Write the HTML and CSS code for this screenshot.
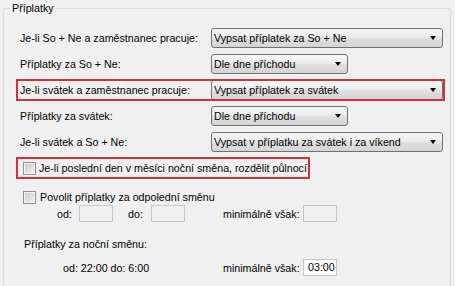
FILE: index.html
```
<!DOCTYPE html>
<html lang="cs">
<head>
    <meta charset="UTF-8">
    <meta name="viewport" content="width=device-width, initial-scale=1.0">
    <title>Příplatky</title>
    <link rel="stylesheet" href="styles.css">
</head>
<body>
    <fieldset class="group">
        <legend>Příplatky</legend>

        <div class="field">
            <label>Je-li So + Ne a zaměstnanec pracuje:</label>
            <div class="combo wide"><span>Vypsat příplatek za So + Ne</span><i class="arrow"></i></div>
        </div>
        <div class="field">
            <label>Příplatky za So + Ne:</label>
            <div class="combo short"><span>Dle dne příchodu</span><i class="arrow"></i></div>
        </div>
        <div class="field marked">
            <label>Je-li svátek a zaměstnanec pracuje:</label>
            <div class="combo wide"><span>Vypsat příplatek za svátek</span><i class="arrow"></i></div>
        </div>
        <div class="field">
            <label>Příplatky za svátek:</label>
            <div class="combo short"><span>Dle dne příchodu</span><i class="arrow"></i></div>
        </div>
        <div class="field">
            <label>Je-li svátek a So + Ne:</label>
            <div class="combo wide"><span>Vypsat v příplatku za svátek i za víkend</span><i class="arrow"></i></div>
        </div>

        <div class="check midnight marked">
            <span class="box"></span>
            <span>Je-li poslední den v měsíci noční směna, rozdělit půlnocí</span>
        </div>

        <div class="check afternoon">
            <span class="box"></span>
            <span>Povolit příplatky za odpolední směnu</span>
        </div>
        <div class="times">
            <span class="lbl-od">od:</span>
            <span class="input disabled"></span>
            <span class="lbl-do">do:</span>
            <span class="input disabled"></span>
            <span class="lbl-min">minimálně však:</span>
            <span class="input disabled"></span>
        </div>

        <div class="caption">Příplatky za noční směnu:</div>
        <div class="times night">
            <span class="range">od: 22:00 do: 6:00</span>
            <span class="lbl-min">minimálně však:</span>
            <span class="input">03:00</span>
        </div>
    </fieldset>
</body>
</html>
```

FILE: styles.css
```
html, body {
    overflow: hidden;
}
body {
    margin: 0;
    background-color: #f0f0f0;
    font-family: "Liberation Sans", Arial, sans-serif;
    font-size: 10.7px;
    color: #000;
}
.group {
    margin: 2px 4px 0 3px;
    padding: 13px 0 0 16px;
    border: 1px solid #d5dfe5;
    border-bottom: none;
    border-radius: 3px 3px 0 0;
    min-height: 280px;
}
.group legend {
    margin-left: -10px;
    padding: 0 2px;
    line-height: 13px;
}

/* label + combo rows */
.field {
    display: flex;
    align-items: center;
    width: 423px;
    height: 20px;
    margin-bottom: 6px;
    position: relative;
}
.field label {
    width: 191px;
    flex: none;
}
.combo {
    box-sizing: border-box;
    height: 20px;
    display: flex;
    align-items: center;
    justify-content: space-between;
    padding: 0 6px 0 2px;
    border: 1px solid #707070;
    border-radius: 3px;
    background: linear-gradient(#f7f7f7, #ececec 45%, #dedede 55%, #d5d5d5);
}
.combo.wide {
    width: 232px;
}
.combo.short {
    width: 137px;
}
.arrow {
    width: 0;
    height: 0;
    border-left: 3.5px solid transparent;
    border-right: 3.5px solid transparent;
    border-top: 4px solid #000;
}

/* red highlight frames */
.marked::after {
    content: "";
    position: absolute;
    left: -4px;
    top: -1px;
    right: -2px;
    bottom: -1px;
    border: 2px solid #d2303c;
    pointer-events: none;
}
.check.marked::after {
    right: -3px;
}

/* checkboxes */
.check {
    position: relative;
    display: flex;
    align-items: center;
    gap: 3px;
    padding-left: 3px;
}
.check.midnight {
    width: fit-content;
    height: 20px;
    margin-top: 1px;
}
.check.afternoon {
    height: 14px;
    margin-top: 12px;
    gap: 4px;
}
.box {
    box-sizing: border-box;
    width: 13px;
    height: 13px;
    border: 1px solid #8e8f8f;
    box-shadow: inset 0 0 0 1px #f4f4f4;
    background: linear-gradient(135deg, #c9c9c9, #f4f4f4);
}

/* time rows */
.times {
    display: flex;
    align-items: center;
    height: 17px;
    margin-top: 1px;
    padding-left: 37px;
}
.input {
    box-sizing: border-box;
    width: 34px;
    height: 17px;
    padding-left: 4px;
    line-height: 15px;
    border: 1px solid #c4c8cc;
    background-color: #fff;
}
.input.disabled {
    background-color: #f0f0f0;
}
.lbl-od {
    width: 22px;
}
.lbl-do {
    width: 23px;
    margin-left: 15px;
}
.times .lbl-min {
    width: 80px;
    margin-left: 38px;
}
.caption {
    height: 14px;
    line-height: 14px;
    margin: 15px 0 0 4px;
}
.times.night {
    margin-top: 8px;
    padding-left: 43px;
}
.times .range {
    width: 160px;
}
.night .lbl-min {
    margin-left: 0;
}
```
